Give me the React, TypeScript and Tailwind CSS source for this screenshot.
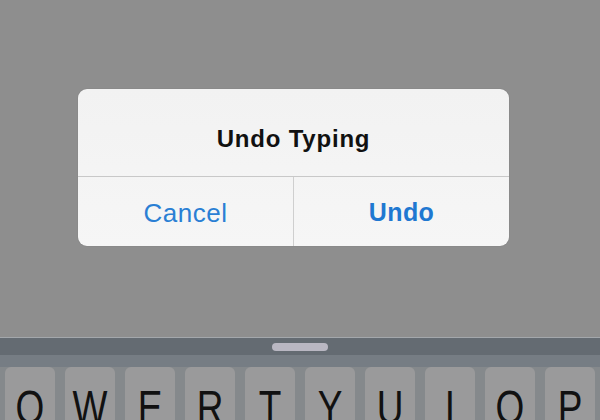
import React from "react";

const keys = ["Q", "W", "E", "R", "T", "Y", "U", "I", "O", "P"];

function AlertDialog() {
  return (
    <div className="flex h-[157px] w-[431px] flex-col overflow-hidden rounded-[9px] bg-gradient-to-b from-[#f2f2f2] to-[#f6f6f6] shadow-[0_0_1px_rgba(0,0,0,0.25)]">
      <div className="flex h-[88px] items-center justify-center border-b border-[#c8c8c8] pt-[13px]">
        <span className="text-[24px] font-bold tracking-[0.8px] text-[#111]">
          Undo Typing
        </span>
      </div>
      <div className="flex flex-1">
        <button className="flex flex-1 items-center justify-center border-r border-[#cfcfcf] pt-[3px] text-[26px] tracking-[0.5px] text-[#2a7fd4]">
          Cancel
        </button>
        <button className="flex flex-1 items-center justify-center pt-[3px] text-[25px] font-bold tracking-[0.4px] text-[#1f78d1]">
          Undo
        </button>
      </div>
    </div>
  );
}

function Keyboard() {
  return (
    <div className="flex flex-1 flex-col bg-[#85898c]">
      <div className="h-px bg-[#a3a7ab]" />
      <div className="flex h-[17px] items-center justify-center bg-[#646b72]">
        <div className="h-[8px] w-[56px] rounded-[4px] bg-[#b9b7c2]" />
      </div>
      <div className="h-[12px] bg-[#767d84]" />
      <div className="flex flex-1 gap-[10px] px-[5px]">
        {keys.map((k) => (
          <div
            key={k}
            className="flex h-[70px] flex-1 justify-center rounded-[6px] bg-[#9a9a9b] pt-[17px]"
          >
            <span className="inline-block origin-top scale-y-[1.28] text-[37px] leading-none text-[#111]">
              {k}
            </span>
          </div>
        ))}
      </div>
    </div>
  );
}

export default function App() {
  return (
    <div
      className="flex h-[420px] w-[600px] flex-col overflow-hidden bg-[#8e8e8e]"
      style={{ fontFamily: '"Liberation Sans", Arial, sans-serif' }}
    >
      <div className="h-[337px] shrink-0 pl-[78px] pt-[89px]">
        <AlertDialog />
      </div>
      <Keyboard />
    </div>
  );
}
